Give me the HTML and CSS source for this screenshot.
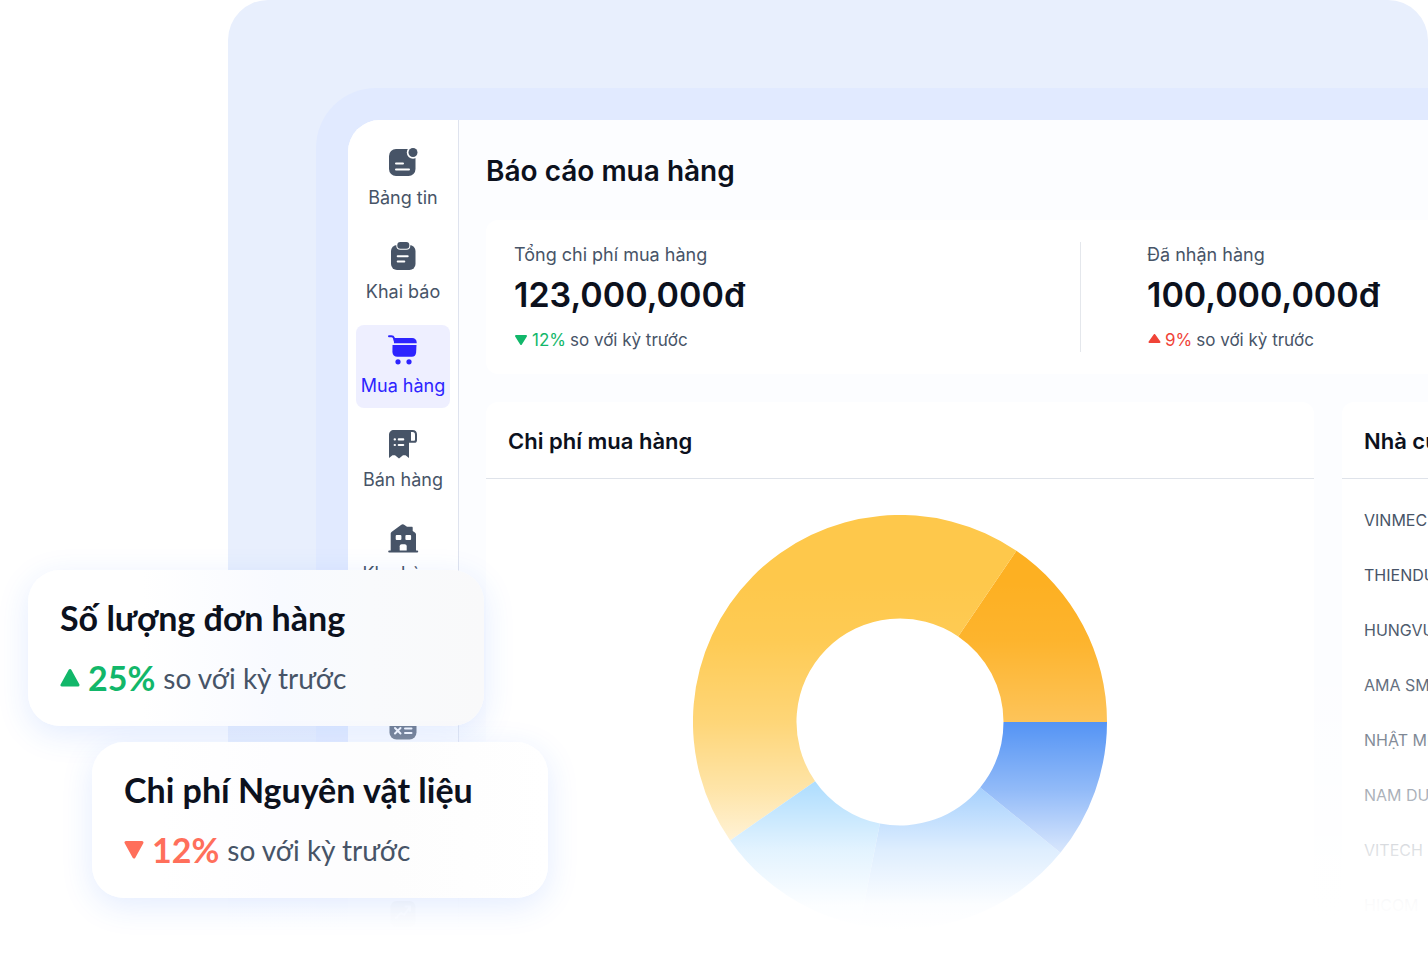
FILE: index.html
```html
<!DOCTYPE html>
<html lang="vi">
<head>
    <meta charset="UTF-8">
    <meta name="viewport" content="width=device-width, initial-scale=1.0">
    <title>Báo cáo mua hàng</title>
    <link rel="stylesheet" href="styles.css">
</head>
<body>
    <div class="stage">
        <div class="backdrop">
            <div class="frame">
                <div class="app">
                    <nav class="sidebar">
                        <a class="nav-item" href="#">
                            <svg class="nav-icon" viewBox="0 0 32 32">
                                <rect x="2" y="3" width="26.5" height="27" rx="7" fill="currentColor"/>
                                <circle cx="26" cy="6.5" r="6.2" fill="#fff"/>
                                <circle cx="26" cy="6.5" r="4.5" fill="currentColor"/>
                                <path d="M9 17.5h7M9 23.5h13" stroke="#fff" stroke-width="2" stroke-linecap="round"/>
                            </svg>
                            <span>Bảng tin</span>
                        </a>
                        <a class="nav-item" href="#">
                            <svg class="nav-icon" viewBox="0 0 32 32">
                                <rect x="4" y="5" width="24.5" height="25" rx="6" fill="currentColor"/>
                                <rect x="9.3" y="1" width="14" height="8.8" rx="4" fill="#fff"/>
                                <rect x="10.3" y="2" width="12" height="6.8" rx="3" fill="currentColor"/>
                                <path d="M10.7 16.2h10M10.7 21.5h6.6" stroke="#fff" stroke-width="2" stroke-linecap="round"/>
                            </svg>
                            <span>Khai báo</span>
                        </a>
                        <a class="nav-item active" href="#">
                            <svg class="nav-icon" viewBox="0 0 32 32">
                                <path d="M2 2.2h2.3c1.3 0 2.2.6 2.6 1.8l1 3.2" fill="none" stroke="currentColor" stroke-width="2" stroke-linecap="round"/>
                                <path d="M6.7 4h18.5c2.6 0 4.4 1.8 4.5 4.2v1.1H7z" fill="currentColor"/>
                                <path d="M5.5 11h24l-.4 7.4c-.2 2.6-1.8 4.3-4.3 4.3H10.4c-3 0-4.9-2-5-4.8z" fill="currentColor"/>
                                <circle cx="11" cy="27.8" r="2.6" fill="currentColor"/>
                                <circle cx="22" cy="27.8" r="2.6" fill="currentColor"/>
                            </svg>
                            <span>Mua hàng</span>
                        </a>
                        <a class="nav-item" href="#">
                            <svg class="nav-icon" viewBox="0 0 32 32">
                                <path d="M7 2h18.5C28.5 2 30 3.8 30 6.5v5.7c0 1.6-1 2.6-2.6 2.6H22V30l-3.5-2.8-2.5 0-4 3.4-4-3.4-2.5 0L2 30V7c0-3 2-5 5-5z" fill="currentColor"/>
                                <path d="M24 4h1.5C27.2 4 28 5 28 6.7v4.8c0 .8-.4 1.3-1.2 1.3H24z" fill="#fff"/>
                                <path d="M7.7 11.4h.2M7.7 17h.2M11.8 11.4h4.4M11.8 17h4.4" stroke="#fff" stroke-width="2.2" stroke-linecap="round"/>
                            </svg>
                            <span>Bán hàng</span>
                        </a>
                        <a class="nav-item" href="#">
                            <svg class="nav-icon" viewBox="0 0 32 32">
                                <path d="M3.7 29V12c0-1 .3-1.6 1.1-2.2L14 3c1.2-.9 2.3-.9 3.5 0L20 4.800h4.700c.7 0 1 .3 1 1V9l2.200 1.500c.8.6 1.100 1.200 1.100 2.100V29z" fill="currentColor"/>
                                <path d="M2.2 29.5h28" stroke="currentColor" stroke-width="2" stroke-linecap="round"/>
                                <rect x="8.7" y="13" width="5.7" height="5" rx="1" fill="#fff"/>
                                <rect x="18.4" y="13" width="5.7" height="5" rx="1" fill="#fff"/>
                                <path d="M12.7 28.5v-4.2c0-1.2.8-2 2-2h3c1.2 0 2 .8 2 2v4.2z" fill="#fff"/>
                            </svg>
                            <span>Kho hàng</span>
                        </a>
                        <!-- items below sit behind the KPI cards, icon only -->
                        <a class="nav-item" href="#" aria-label="Sản xuất">
                            <svg class="nav-icon" viewBox="0 0 32 32">
                                <rect x="4" y="4" width="24" height="26" rx="6" fill="currentColor"/>
                            </svg>
                        </a>
                        <a class="nav-item" href="#" aria-label="Kế toán">
                            <svg class="nav-icon" viewBox="0 0 32 32">
                                <rect x="2.5" y="3" width="27" height="26.5" rx="7" fill="currentColor"/>
                                <path d="M8 18l5.500 5.500M13.500 18L8 23.500M18 18.500h6.500M18 23h6.500M10.500 7v6M7.500 10h6M18 10h6.500" stroke="#fff" stroke-width="2" stroke-linecap="round"/>
                            </svg>
                        </a>
                        <a class="nav-item" href="#" aria-label="Nhân sự">
                            <svg class="nav-icon" viewBox="0 0 32 32">
                                <circle cx="16" cy="16" r="13" fill="currentColor"/>
                            </svg>
                        </a>
                        <a class="nav-item" href="#" aria-label="Báo cáo">
                            <svg class="nav-icon" viewBox="0 0 32 32">
                                <rect x="3.5" y="3" width="25" height="26" rx="6" fill="currentColor"/>
                                <path d="M9 20l5-5 3 2 6-8M18.5 8.500H23V13" fill="none" stroke="#fff" stroke-width="2" stroke-linecap="round"/>
                            </svg>
                        </a>
                    </nav>

                    <main class="main">
                        <h1 class="page-title">Báo cáo mua hàng</h1>

                        <section class="stats">
                            <div class="stat">
                                <div class="stat-label">Tổng chi phí mua hàng</div>
                                <div class="stat-value">123,000,000đ</div>
                                <div class="stat-delta">
                                    <svg class="arrow" viewBox="0 0 14 12"><path d="M2 2h10L7 10z" fill="#12b76a" stroke="#12b76a" stroke-width="2" stroke-linejoin="round"/></svg>
                                    <span class="green">12%</span>
                                    <span>so với kỳ trước</span>
                                </div>
                            </div>
                            <div class="stat">
                                <div class="stat-label">Đã nhận hàng</div>
                                <div class="stat-value">100,000,000đ</div>
                                <div class="stat-delta">
                                    <svg class="arrow" viewBox="0 0 14 12"><path d="M2.5 8h10l-5-7z" fill="#f04438" stroke="#f04438" stroke-width="2" stroke-linejoin="round"/></svg>
                                    <span class="red">9%</span>
                                    <span>so với kỳ trước</span>
                                </div>
                            </div>
                        </section>

                        <div class="panels">
                            <section class="panel chart-panel">
                                <h2 class="panel-title">Chi phí mua hàng</h2>
                                <div class="chart">
                                    <svg class="donut" viewBox="-207 -207 414 414">
                                        <path d="M207 0A207 207 0 0 0 116.4 -171.2L58.2 -85.6A103.5 103.5 0 0 1 103.5 0z" fill="#fdb022"/>
                                        <path d="M116.4 -171.2A207 207 0 0 0 -169.8 118.4L-84.9 59.2A103.5 103.5 0 0 1 58.2 -85.6z" fill="#fec84b"/>
                                        <path d="M-169.8 118.4A207 207 0 0 0 -40.2 203.1L-20.1 101.5A103.5 103.5 0 0 1 -84.9 59.2z" fill="#62bdfd"/>
                                        <path d="M-40.2 203.1A207 207 0 0 0 160.4 130.8L80.2 65.4A103.5 103.5 0 0 1 -20.1 101.5z" fill="#4aa0fb"/>
                                        <path d="M160.4 130.8A207 207 0 0 0 207 0L103.5 0A103.5 103.5 0 0 1 80.2 65.4z" fill="#1b70f1"/>
                                    </svg>
                                </div>
                            </section>
                            <section class="panel supplier-panel">
                                <h2 class="panel-title">Nhà cung cấp</h2>
                                <ul class="suppliers">
                                    <li>VINMEC</li>
                                    <li>THIENDUC</li>
                                    <li>HUNGVUONG</li>
                                    <li>AMA SMART</li>
                                    <li>NHẬT MINH</li>
                                    <li>NAM DUONG</li>
                                    <li>VITECH</li>
                                    <li>HICOM</li>
                                </ul>
                            </section>
                        </div>
                    </main>
                </div>
            </div>
        </div>
        <div class="fade"></div>

        <div class="kpis">
            <div class="kpi">
                <div class="kpi-title">Số lượng đơn hàng</div>
                <div class="kpi-row">
                    <svg class="kpi-arrow" viewBox="0 0 20 20"><path d="M2 17h16L10 2.5z" fill="#12b76a" stroke="#12b76a" stroke-width="3" stroke-linejoin="round"/></svg>
                    <strong class="green">25%</strong>
                    <span>so với kỳ trước</span>
                </div>
            </div>
            <div class="kpi kpi-shifted">
                <div class="kpi-title">Chi phí Nguyên vật liệu</div>
                <div class="kpi-row">
                    <svg class="kpi-arrow" viewBox="0 0 20 20"><path d="M2 2.5h16L10 17z" fill="#ff6f5b" stroke="#ff6f5b" stroke-width="3" stroke-linejoin="round"/></svg>
                    <strong class="coral">12%</strong>
                    <span>so với kỳ trước</span>
                </div>
            </div>
        </div>
    </div>
</body>
</html>
```

FILE: styles.css
```css
* {
    box-sizing: border-box;
}
body {
    margin: 0;
    background: #fff;
    color: #475467;
    font-family: Inter, "Noto Sans", sans-serif;
}
h1, h2, ul {
    margin: 0;
    padding: 0;
}
.stage {
    position: relative;
    height: 100vh;
    overflow: hidden;
    padding-left: 228px;
}
.backdrop {
    padding: 88px 0 0 88px;
    background: #e8effd;
    border-radius: 40px;
    overflow: hidden;
}
.frame {
    padding: 32px 0 0 32px;
    background: #e1eaff;
    border-radius: 60px 0 0 0;
}
/* the app is wider than the frame and runs off the right edge */
.app {
    display: flex;
    width: calc(100% + 276px);
    background: #fcfdff;
    border-radius: 32px 0 0 0;
    overflow: hidden;
}

/* sidebar */
.sidebar {
    display: flex;
    flex-direction: column;
    gap: 11px;
    flex: none;
    width: 111px;
    padding: 17px 8px;
    background: #fff;
    border-right: 1px solid #dfe3ee;
}
.nav-item {
    display: flex;
    flex-direction: column;
    align-items: center;
    gap: 8px;
    min-height: 83px;
    padding: 9px 0 10px;
    border-radius: 8px;
    color: #475467;
    font-size: 18px;
    line-height: 24px;
    text-decoration: none;
    white-space: nowrap;
}
.nav-item.active {
    background: #eeefff;
    color: #2d24ff;
}
.nav-icon {
    width: 32px;
    height: 32px;
}

/* report */
.main {
    flex: 1;
    min-width: 0;
    padding: 31px 28px 28px 27px;
}
.page-title {
    color: #0c111d;
    font-size: 28px;
    font-weight: 600;
    line-height: 40px;
}
.stats {
    display: flex;
    margin-top: 29px;
    padding: 22px 0;
    background: #fff;
    border-radius: 12px;
}
.stat {
    width: 50%;
    padding-left: 66px;
}
.stat:first-child {
    padding-left: 28px;
    border-right: 1px solid #e4e7ec;
}
.stat-label {
    font-size: 18px;
    line-height: 26px;
}
.stat-value {
    margin: 6px 0 12px;
    color: #0c111d;
    font-size: 34px;
    font-weight: 600;
    line-height: 42px;
}
.stat-delta {
    display: flex;
    align-items: center;
    gap: 4px;
    font-size: 17px;
    line-height: 24px;
}
.arrow {
    width: 14px;
    height: 12px;
}
.green {
    color: #12b76a;
}
.red {
    color: #f04438;
}
.coral {
    color: #ff6f5b;
}
.panels {
    display: flex;
    gap: 28px;
    margin-top: 28px;
}
.panel {
    background: #fff;
    border-radius: 12px;
}
.chart-panel {
    flex: 1;
}
.supplier-panel {
    flex: 0 0 334px;
}
.panel-title {
    padding: 24px 22px 22px;
    border-bottom: 1px solid #dfe3ea;
    color: #0c111d;
    font-size: 22px;
    font-weight: 600;
    line-height: 30px;
}
.chart {
    display: flex;
    justify-content: center;
    padding: 36px;
}
.donut {
    width: 414px;
    height: 414px;
}
.suppliers {
    padding: 14px 22px;
    list-style: none;
    font-size: 16px;
    line-height: 55px;
}

/* everything behind the KPI cards melts into the page */
.fade {
    position: absolute;
    left: 0;
    right: 0;
    bottom: 0;
    height: 380px;
    background: linear-gradient(rgba(255,255,255,0) 0, rgba(255,255,255,0.05) 60px, rgba(255,255,255,0.25) 142px, rgba(255,255,255,0.52) 210px, rgba(255,255,255,0.82) 270px, rgba(255,255,255,0.98) 325px, #fff 350px);
}

/* KPI cards */
.kpis {
    position: absolute;
    left: 28px;
    bottom: 62px;
    display: flex;
    flex-direction: column;
    gap: 16px;
    font-family: Lato, "Noto Sans", sans-serif;
}
.kpi {
    width: 456px;
    padding: 28px 32px;
    background: linear-gradient(90deg, #fff 25%, #f8faff 55%, #f9fafc 75%, #f9f9fa);
    border-radius: 32px;
    box-shadow: 0 8px 32px rgba(41,112,255,0.13);
}
.kpi-shifted {
    margin-left: 64px;
    background: linear-gradient(90deg, #fff 15%, #fdfdff 40%, #fdfdfd 65%, #fff);
}
.kpi-title {
    margin-bottom: 20px;
    color: #0c111d;
    font-size: 34px;
    font-weight: 700;
    line-height: 40px;
}
.kpi-row {
    display: flex;
    align-items: center;
    gap: 8px;
    font-size: 28px;
    line-height: 40px;
}
.kpi-row strong {
    font-size: 34px;
    font-weight: 700;
}
.kpi-arrow {
    width: 20px;
    height: 20px;
}
```
